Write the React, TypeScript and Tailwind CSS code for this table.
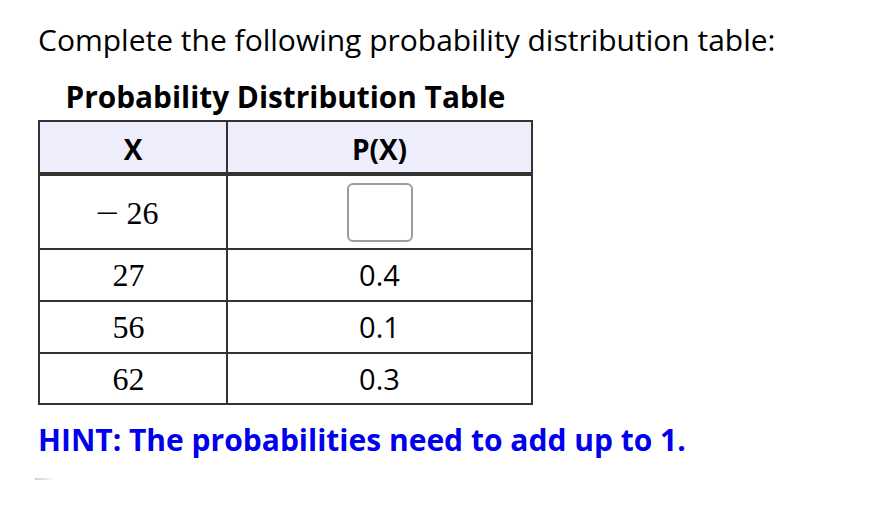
import React from 'react';

const rows = [
  { x: '27', p: '0.4' },
  { x: '56', p: '0.1' },
  { x: '62', p: '0.3' },
];

const mathFont = "font-['Liberation_Serif',serif] text-[32px]";

export default function App() {
  return (
    <div className="w-[896px] h-[508px] bg-white text-black pl-[38px] pt-[20px] font-['Open_Sans',sans-serif]">
      <p className="text-[30px] leading-[40px]">Complete the following probability distribution table:</p>

      <div className="w-[495px] mt-[17px]">
        <div className="text-center font-bold text-[29.8px] leading-[40px] mb-[3px]">
          Probability Distribution Table
        </div>

        {/* table */}
        <div className="border-2 border-[#333]">
          <div className="grid grid-cols-[188px_1fr] h-[54px] bg-[#ededfb] border-b-4 border-[#333] text-[28px] font-bold leading-[50px]">
            <div className="border-r-2 border-[#333] text-center pt-[2px]">X</div>
            <div className="text-center pt-[2px]">P(X)</div>
          </div>

          <div className="grid grid-cols-[188px_1fr] h-[74px] border-b-2 border-[#333]">
            <div className={`border-r-2 border-[#333] flex items-center justify-center pr-[9px] pt-[2px] ${mathFont}`}>
              <span className="inline-block scale-x-[1.3] mr-[10px]">−</span>26
            </div>
            <div className="flex items-center justify-center">
              <div className="w-[66px] h-[59px] border-2 border-[#9c9c9c] rounded-[6px] bg-white" />
            </div>
          </div>

          {rows.map((r, i) => (
            <div
              key={r.x}
              className={`grid grid-cols-[188px_1fr] ${i < rows.length - 1 ? 'h-[52px] border-b-2 border-[#333]' : 'h-[49px]'}`}
            >
              <div className={`border-r-2 border-[#333] text-center pr-[9px] leading-[50px] ${mathFont}`}>{r.x}</div>
              <div className="text-center text-[29px] leading-[50px]">{r.p}</div>
            </div>
          ))}
        </div>
      </div>

      <p className="mt-[15px] text-[30px] leading-[40px] font-bold text-[#0000ee]">
        HINT: The probabilities need to add up to 1.
      </p>
      <div className="mt-[18px] -ml-[3px] w-[20px] h-[2px] bg-gradient-to-r from-[#cfcfcf] to-white" />
    </div>
  );
}
